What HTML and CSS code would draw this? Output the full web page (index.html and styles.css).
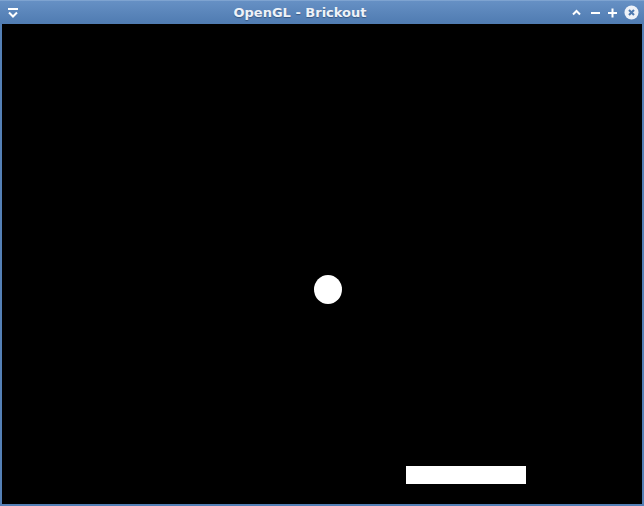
FILE: index.html
```html
<!DOCTYPE html>
<html>
<head>
<meta charset="utf-8">
<title>OpenGL - Brickout</title>
<link rel="stylesheet" href="styles.css">
</head>
<body>
<div class="window">
  <div class="titlebar">
    <div class="tb-left">
      <svg class="icon" width="12" height="12" viewBox="0 0 12 12">
        <rect x="1" y="1" width="10" height="2" fill="#fff"/>
        <path d="M2 5.5 L6 9.5 L10 5.5" fill="none" stroke="#fff" stroke-width="2"/>
      </svg>
    </div>
    <div class="title">OpenGL - Brickout</div>
    <div class="tb-right">
      <svg class="icon up" width="11" height="11" viewBox="0 0 11 11">
        <path d="M2 7.5 L5.5 4 L9 7.5" fill="none" stroke="#fff" stroke-width="2"/>
      </svg>
      <svg class="icon" width="11" height="11" viewBox="0 0 11 11">
        <rect x="1" y="5" width="9" height="2" fill="#fff"/>
      </svg>
      <svg class="icon" width="11" height="11" viewBox="0 0 11 11">
        <rect x="1" y="5" width="9" height="2" fill="#fff"/>
        <rect x="4.5" y="1.5" width="2" height="9" fill="#fff"/>
      </svg>
      <svg class="icon" width="15" height="15" viewBox="0 0 15 15">
        <circle cx="7.5" cy="7.5" r="7" fill="#eef2f8"/>
        <path d="M5 5 L10 10 M10 5 L5 10" stroke="#4f7ab0" stroke-width="2.1"/>
      </svg>
    </div>
  </div>
  <div class="canvas">
    <div class="ball"></div>
    <div class="paddle"></div>
  </div>
</div>
</body>
</html>
```
FILE: styles.css
```css
html, body {
  margin: 0;
  padding: 0;
  background: #000;
}
.window {
  width: 644px;
  height: 506px;
  display: flex;
  flex-direction: column;
  background: #5480b6;
  box-sizing: border-box;
}
.titlebar {
  height: 24px;
  display: flex;
  align-items: center;
  background: linear-gradient(#6690c4, #4f7bb1);
  border-top: 1px solid #7ea3d0;
  box-sizing: border-box;
  position: relative;
}
.tb-left {
  padding-left: 7px;
  display: flex;
  align-items: center;
}
.title {
  flex: 1;
  text-align: center;
  font-family: "DejaVu Sans", sans-serif;
  font-weight: bold;
  font-size: 13px;
  color: #eef2f8;
  text-shadow: 0 1px 1px rgba(30, 50, 80, 0.5);
  padding-left: 10px;
}
.tb-right {
  display: flex;
  align-items: center;
  gap: 6px;
  padding-right: 5px;
}
.up {
  margin-right: 2px;
}
.icon {
  display: block;
}
.canvas {
  flex: 1;
  margin: 0 2px 2px 2px;
  background: #000;
  position: relative;
}
.ball {
  position: absolute;
  left: 312px;
  top: 251px;
  width: 28px;
  height: 29px;
  border-radius: 50%;
  background: #fff;
}
.paddle {
  position: absolute;
  left: 404px;
  top: 442px;
  width: 120px;
  height: 18px;
  background: #fff;
}
```
